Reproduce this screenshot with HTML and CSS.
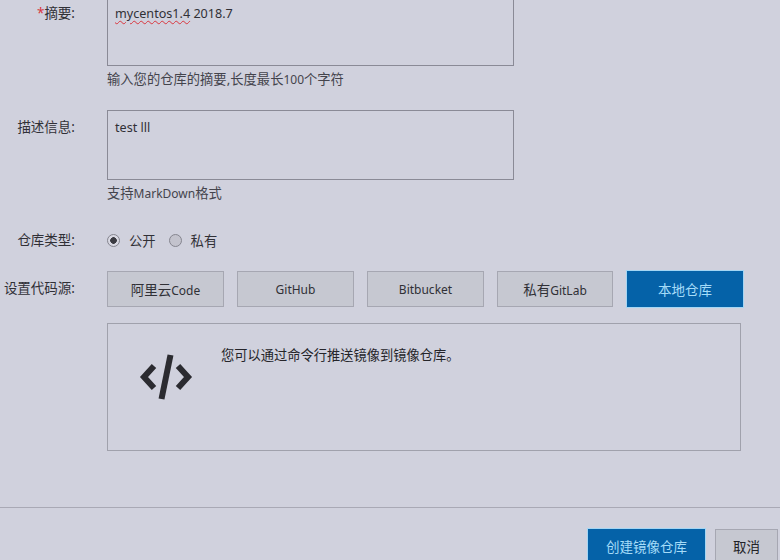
FILE: index.html
```html
<!DOCTYPE html>
<html lang="zh">
<head>
<meta charset="utf-8">
<title>创建镜像仓库</title>
<link rel="stylesheet" href="styles.css">
</head>
<body>
<main class="page">
  <form class="form">
    <div class="row row-summary">
      <div class="label"><span class="req">*</span>摘要:</div>
      <div class="field">
        <div class="area area-clipped"><span class="typo">mycentos1.4</span> 2018.7</div>
        <div class="hint">输入您的仓库的摘要,长度最长<span class="latin">100</span>个字符</div>
      </div>
    </div>
    <div class="row row-desc">
      <div class="label">描述信息:</div>
      <div class="field">
        <div class="area area-desc">test lll</div>
        <div class="hint">支持<span class="latin">MarkDown</span>格式</div>
      </div>
    </div>
    <div class="row row-type">
      <div class="label">仓库类型:</div>
      <div class="field radios">
        <span class="radio radio-on"></span><span class="radio-text">公开</span>
        <span class="radio"></span><span class="radio-text">私有</span>
      </div>
    </div>
    <div class="row row-source">
      <div class="label">设置代码源:</div>
      <div class="field">
        <div class="tabs">
          <button type="button" class="btn">阿里云<span class="latin">Code</span></button>
          <button type="button" class="btn"><span class="latin">GitHub</span></button>
          <button type="button" class="btn"><span class="latin">Bitbucket</span></button>
          <button type="button" class="btn btn-narrow">私有<span class="latin">GitLab</span></button>
          <button type="button" class="btn btn-primary btn-local">本地仓库</button>
        </div>
        <div class="panel">
          <svg class="code-icon" width="56" height="48" viewBox="0 0 56 48" fill="none" stroke="#2b2b30" stroke-width="6" aria-hidden="true">
            <path d="M16 13 L6 24 L16 35"/>
            <path d="M40 13 L50 24 L40 35"/>
            <path d="M32.500 2 L23.500 46"/>
          </svg>
          <p class="panel-text">您可以通过命令行推送镜像到镜像仓库。</p>
        </div>
      </div>
    </div>
  </form>
  <footer class="footer">
    <button type="button" class="btn btn-primary btn-create">创建镜像仓库</button>
    <button type="button" class="btn btn-cancel">取消</button>
  </footer>
</main>
</body>
</html>
```
FILE: styles.css
```css
* { box-sizing: border-box; }
html, body { margin: 0; padding: 0; }
body {
  width: 780px;
  height: 560px;
  overflow: hidden;
  background: #d0d1dd;
  color: #303036;
  font-family: "Noto Sans", "Noto Sans CJK SC", sans-serif;
  font-size: 12px;
}
.page { display: flex; flex-direction: column; height: 560px; }
.form { height: 507px; }
.row { display: flex; }
.label {
  width: 75px;
  margin-right: 32px;
  flex: none;
  text-align: right;
  font-size: 13.500px;
  line-height: 18px;
  white-space: nowrap;
}
.req { color: #d9363e; }
.field { flex: none; }
.latin { font-size: 12px; line-height: 1; }
.row-summary .label { padding-top: 4px; }
.row-desc { margin-top: 22px; }
.row-desc .label { padding-top: 8px; }
.area {
  width: 407px;
  height: 70px;
  border: 1px solid #8a8a96;
  padding: 7px;
  line-height: 18px;
  font-size: 12.600px;
}
.area-desc { padding-top: 8px; }
.area-clipped { height: 66px; border-top: 0; padding-top: 5px; }
.typo { text-decoration: underline wavy #d9363e 1px; text-underline-offset: 2px; }
.hint { height: 18px; margin-top: 4px; font-size: 13.300px; line-height: 18px; color: #44444c; white-space: nowrap; }
.row-type { margin-top: 26px; align-items: center; height: 24px; }
.radios { display: flex; align-items: center; height: 24px; }
.radio {
  width: 13px;
  height: 13px;
  border-radius: 50%;
  border: 1px solid #85858f;
  background: #c3c3cd;
}
.radio-on { background: radial-gradient(circle, #3b3b42 0 3px, #d8d8e2 3.600px); }
.radio-text { margin: 0 13px 0 9px; font-size: 13.300px; }
.row-source { margin-top: 19px; }
.row-source .label { padding-top: 8px; }
.tabs { display: flex; gap: 13px; }
.btn {
  width: 117px;
  height: 36px;
  padding: 0 0 1px;
  border: 1px solid #a6a7b2;
  background: #c6c8d1;
  color: #303036;
  font-family: inherit;
  font-size: 13.500px;
}
.btn-narrow { width: 116px; }
.btn-primary {
  border: 0;
  box-shadow: 0 0 0 1px #a4d6f4;
  background: #0562a8;
  color: #a5dcf8;
}
.btn-local { width: 116px; margin-left: 1px; }
.panel {
  display: flex;
  align-items: flex-start;
  width: 634px;
  height: 128px;
  margin-top: 16px;
  border: 1px solid #a0a1ac;
}
.code-icon { margin: 29px 0 0 30px; flex: none; }
.panel-text { margin: 22px 0 0 27px; font-size: 13.250px; line-height: 18px; color: #25252a; }
.footer {
  display: flex;
  gap: 10px;
  height: 53px;
  padding: 21px 0 0 588px;
  border-top: 1px solid #a9a9b5;
}
.btn-create { flex: none; width: 117px; padding-bottom: 3px; }
.btn-cancel { flex: none; width: 63px; padding-bottom: 3px; color: #222226; }
```
